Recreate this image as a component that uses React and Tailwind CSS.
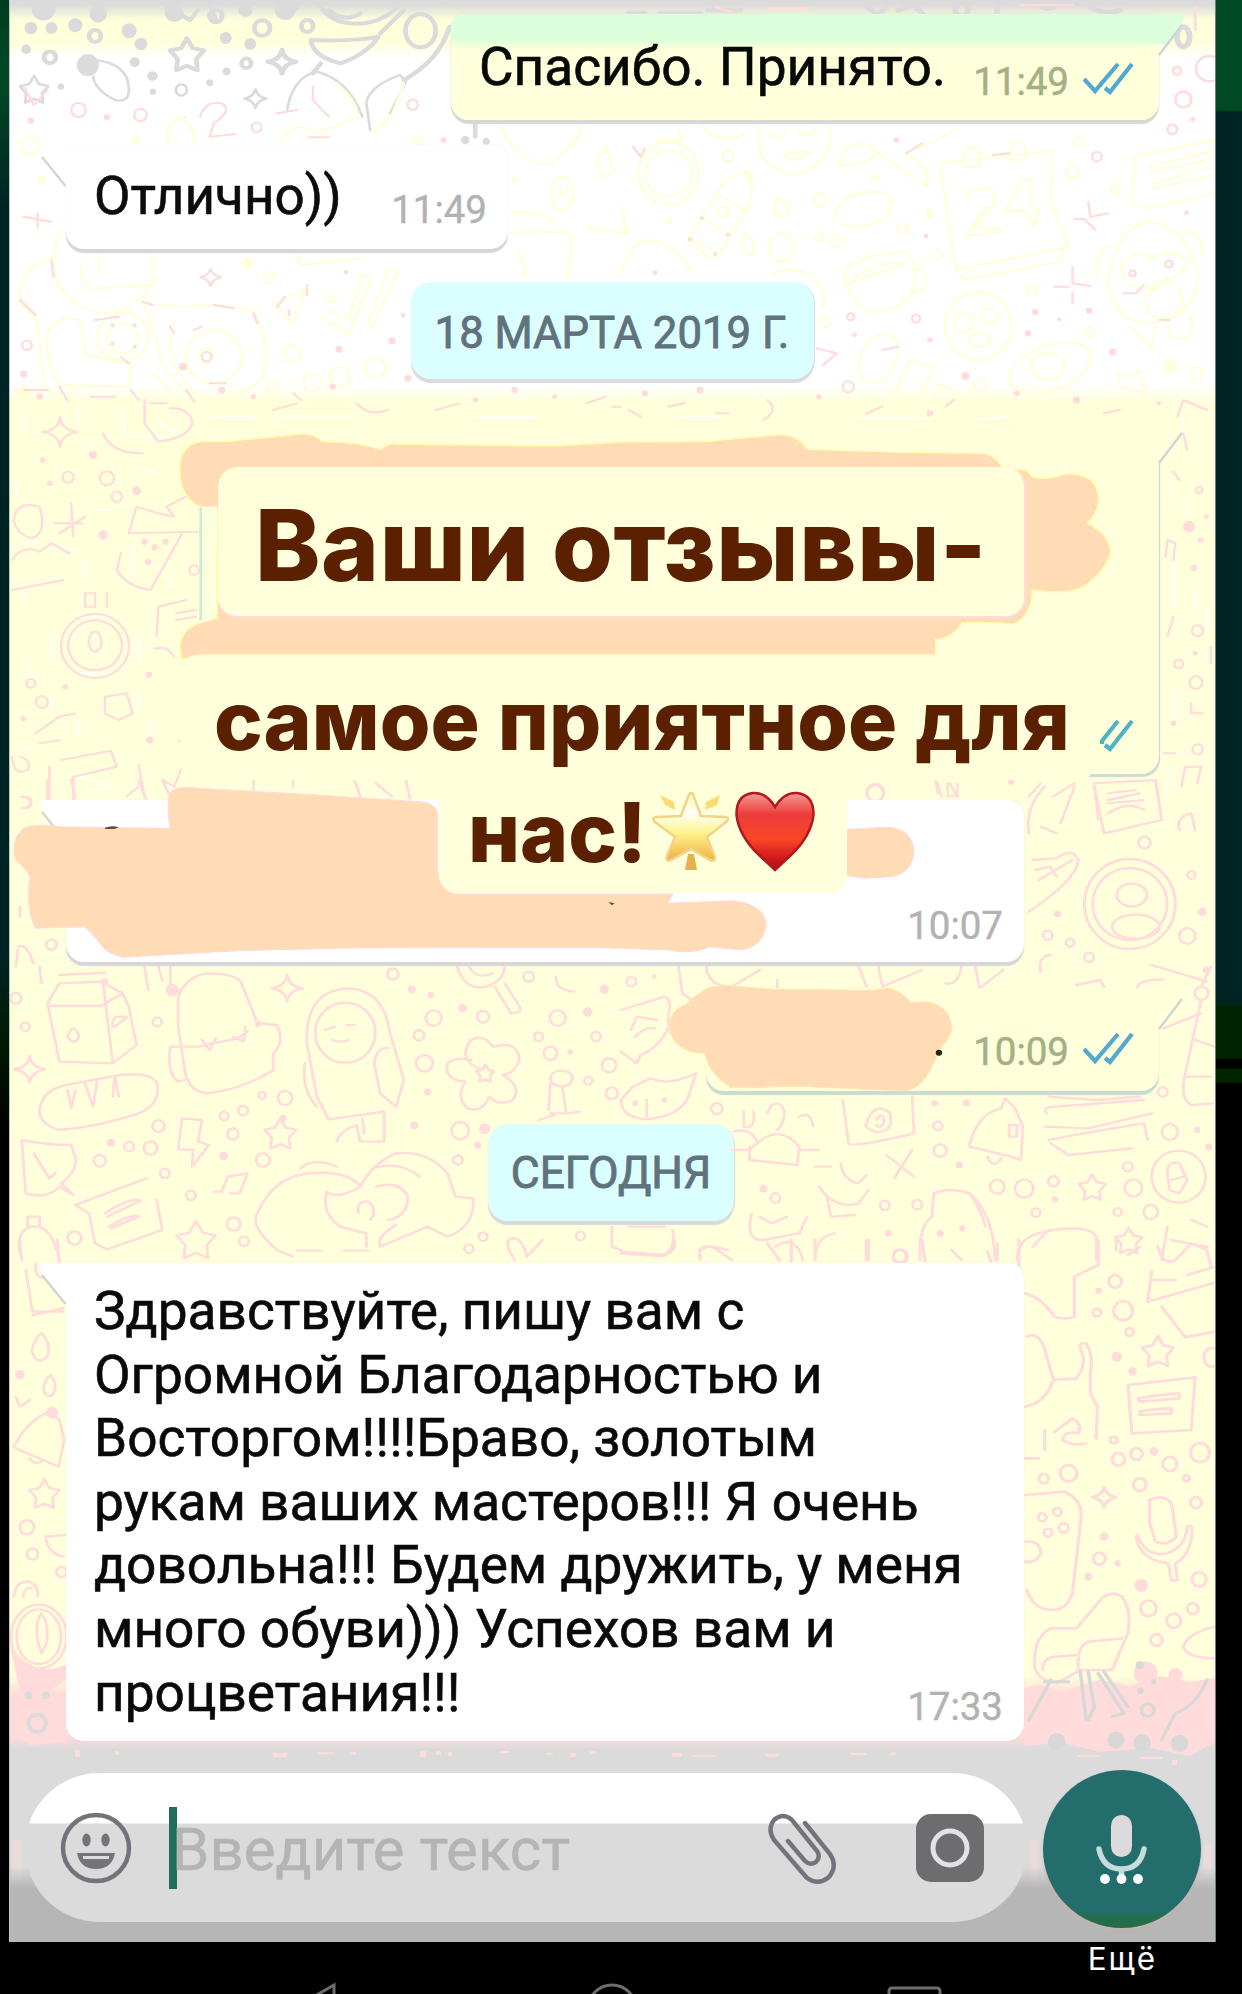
import React from "react";

/* A tile of wallpaper doodles, drawn in its own 1568-wide coordinate space. */
function Tile({ x, y, ky = 1 / 3, color, w = 6, paths = [], rings = [], dots = [] }) {
  return (
    <g transform={`translate(${x} ${y}) scale(0.396 ${ky})`} fill="none" stroke={color} strokeWidth={w + 1} strokeLinejoin="round" strokeLinecap="round">
      {paths.map((d, i) => <path key={i} d={d} />)}
      {rings.map(([cx, cy, r, r2], i) => <ellipse key={i} cx={cx} cy={cy} rx={r} ry={r2 || r * 1.18} />)}
      {dots.map(([cx, cy, r], i) => <ellipse key={i} cx={cx} cy={cy} rx={r} ry={r * 1.18} fill={color} stroke="none" />)}
    </g>
  );
}

const star = (x, y, r) => {
  let d = "";
  for (let i = 0; i < 10; i++) {
    const a = -Math.PI / 2 + (i * Math.PI) / 5;
    const k = i % 2 ? r * 0.55 : r;
    d += `${i ? "L" : "M"}${(x + Math.cos(a) * k).toFixed(1)} ${(y + Math.sin(a) * k * 1.18).toFixed(1)}`;
  }
  return d + "Z";
};
const spark = (x, y, r) =>
  `M${x} ${y - r}Q${x + 4} ${y - 6} ${x + r} ${y}Q${x + 4} ${y + 6} ${x} ${y + r}Q${x - 4} ${y + 6} ${x - r} ${y}Q${x - 4} ${y - 6} ${x} ${y - r}Z`;

const GRAY = "#dbdbdb";
const YEL = "#ffffdb";
const PINK = "#ffdbdb";

function Wallpaper() {
  return (
    <svg className="absolute left-0 top-0 h-[1994px] w-[1242px]" viewBox="0 0 1242 1994">
      <clipPath id="screen"><rect x="10" y="0" width="1205" height="1942" /></clipPath>
      <g clipPath="url(#screen)">
      <Tile x={0} y={0} color={GRAY} w={11}
        paths={[
          "M30 4H1130M60 16H200M420 20L480 60L500 30M530 15L545 60M690 10L730 50L760 5",
          "M800 0Q830 80 920 70Q980 60 1010 10M830 30Q870 70 910 40",
          "M785 120Q900 125 955 110Q930 160 860 190Q790 170 785 120Z",
          "M810 190L790 220M960 100L1020 30M1135 80Q1110 180 1020 240M1200 370V410",
          star(472, 168, 45), spark(712, 185, 36),
        ]}
        rings={[[240, 108, 15], [126, 172, 15], [662, 84, 20], [776, 78, 15], [622, 190, 12], [1062, 92, 38, 50], [385, 228, 7], [545, 48, 16]]}
        dots={[[248, 42, 22], [190, 76, 18], [326, 92, 19], [78, 84, 16], [130, 84, 15], [356, 132, 16], [570, 114, 15], [632, 132, 15], [340, 186, 13], [572, 214, 10], [530, 248, 9], [154, 260, 8], [386, 275, 8], [222, 195, 28], [66, 148, 12], [720, 30, 26], [440, 38, 24], [620, 30, 18], [110, 26, 30], [1175, 420, 11], [1228, 424, 9]]} />
      <Tile x={0} y={0} color={GRAY} w={6}
        paths={["M240 180Q320 190 325 260Q330 310 290 300Q240 270 235 230", star(86, 272, 38), "M725 330Q740 230 800 215Q880 240 915 350", "M1010 225Q930 260 925 310L935 390M1010 225L1025 245L985 340", spark(645, 296, 28)]}
        rings={[[458, 270, 14]]} />
      <Tile x={0} y={0} color={PINK} w={5}
        paths={["M505 350Q520 300 560 310Q590 330 540 370L530 410L595 402M700 340L750 330M790 260V300L830 350M780 412H830M60 260L85 315L120 270M425 390Q440 350 465 350"]}
        rings={[[198, 330, 18], [355, 345, 16], [648, 382, 12], [1042, 314, 13]]}
        dots={[[270, 352, 8], [78, 362, 8], [1120, 420, 7]]} />
      <Tile x={0} y={0} color={YEL} w={6}
        paths={[
          "M425 435Q420 360 460 350Q500 400 485 435M705 435Q740 350 800 400L905 350Q900 300 850 250M945 395L990 345L1020 250",
          "M1265 380Q1300 480 1380 495Q1450 450 1470 380M1505 500Q1510 460 1530 440L1550 520L1520 530Z",
          "M1290 640Q1390 630 1400 680M1290 700Q1400 690 1440 700Q1450 760 1430 830M1300 750Q1340 790 1320 830",
          "M95 640V700M55 650L130 665M1485 680L1568 700M150 700Q110 820 180 900Q270 980 350 900Q410 840 380 770",
          "M205 790Q200 870 240 865L380 855M250 770V820M50 870Q70 780 130 775M50 870Q55 940 90 945L115 1165L175 1200",
          "M120 1000Q140 940 200 960Q215 1000 215 1065L330 1090L325 1160L150 1155Q110 1080 120 1000Z",
          "M360 905Q440 930 540 915L640 930Q690 1050 660 1140Q600 1200 490 1190Q400 1120 400 1030Z",
          "M430 970V1080L490 1180M690 910L770 870L740 970Z M810 950L880 1005L940 830L915 825L880 960L830 930M940 985L1005 815L980 810L930 960Z",
          "M750 760L760 795L910 775M175 1160V1260M360 1170L370 1260M380 1120Q440 1160 460 1250",
        ]}
        rings={[[1420, 580, 28, 50], [1422, 572, 10], [310, 1010, 65, 72], [310, 1015, 40, 45], [738, 1062, 22], [948, 1104, 26], [858, 1130, 25], [790, 1145, 24], [688, 1160, 14], [76, 436, 24], [836, 892, 12], [680, 832, 14], [344, 420, 8], [1055, 420, 10], [540, 1070, 70, 80], [520, 1068, 18]]}
        dots={[[625, 790, 14], [1300, 540, 9], [106, 540, 12], [60, 1180, 20]]} />
      <Tile x={0} y={0} color={PINK} w={5}
        paths={["M60 650L130 665M95 640V680", spark(532, 832, 26), "M130 780L135 830M50 900L90 945M360 905L385 915M540 915L590 925M640 940L650 970M430 980L440 1000M700 920L720 890M775 855V885M240 960L300 950M305 1070L325 1090M530 1150H570M730 930V945M490 990L510 980"]}
        rings={[[68, 1036, 12], [522, 1070, 12]]}
        dots={[[874, 817, 6], [990, 1022, 9], [856, 1048, 9], [60, 1122, 9], [1018, 946, 6], [284, 976, 5], [340, 976, 5], [284, 1032, 5], [340, 1040, 5], [1030, 1135, 9], [462, 1100, 10]]} />

      <Tile x={621} y={0} color={GRAY} w={14}
        paths={["M0 5H1430M1180 15Q1220 50 1260 30M700 30L740 15L760 40M950 20V40M1050 10Q1080 40 1100 10M620 20L650 45L670 20M20 40H60M100 40H200M220 30H300"]}
        rings={[[860, 30, 16], [1420, 110, 16, 30]]} />
      <Tile x={621} y={0} color={PINK} w={6}
        paths={["M370 25H480M1010 15H1140M1450 20V90M240 22L290 40"]}
        rings={[[1420, 298, 20], [1486, 206, 34, 38], [1404, 212, 10], [1392, 388, 12]]} dots={[[1444, 358, 6]]} />
      <Tile x={621} y={0} color={YEL} w={6}
        paths={[
          "M205 380Q260 440 315 400M350 380Q330 500 440 525Q540 490 525 380M375 395Q400 440 420 390M440 390Q480 420 490 385M410 460Q440 500 480 455Z",
          "M90 420H155L145 390M170 720L260 545Q300 510 325 520Q340 560 320 620L240 775Q190 760 170 720ZM240 580L310 630M205 655L275 705M180 720L240 750M300 520L320 510L325 545",
          "M550 495Q560 430 620 430L650 460L770 560Q790 520 720 460L850 390M550 495Q600 505 650 460",
          "M545 630Q560 570 660 575Q700 590 670 650Q620 690 560 675Q530 650 545 630Z",
          "M805 490L1090 452L1085 600L1130 740L870 805L845 800ZM845 805L870 838L1110 785L1115 750",
          "M865 500Q860 440 890 440Q915 450 905 500ZM985 480Q980 425 1005 425Q1030 440 1020 480Z",
          "M865 600Q880 560 930 565Q960 590 930 630L890 680L960 685V695L870 708L920 620M970 630L1015 540H1035V625L1055 625L1045 680L1025 635Z",
          "M1295 470L1500 420M1295 470L1290 610L1335 625L1500 580M1335 500L1490 455M1335 520L1500 475M1345 550L1490 500M1345 565L1500 525",
          "M560 820Q600 760 720 755Q760 800 730 890Q680 940 640 935Q580 920 560 820ZM575 850Q630 780 720 790L575 850M735 810Q780 800 770 850Q755 890 735 870",
          "M0 820Q30 700 90 725Q150 750 175 810M385 820Q450 790 490 840Q520 880 510 920M0 620L15 700H0",
          "M1240 800Q1260 680 1330 665Q1410 680 1440 760Q1490 900 1380 960Q1290 990 1250 920Q1215 860 1240 800ZM1240 740Q1200 740 1205 830M1410 695Q1470 690 1465 760",
          "M1265 800Q1300 740 1340 775Q1380 740 1430 780Q1420 830 1370 840L1350 870L1310 860Q1265 850 1265 800ZM1290 980L1340 1045L1350 980M1380 970Q1380 1020 1420 1015Q1450 1000 1440 950",
          "M600 1110Q600 1030 660 1000Q710 1010 700 1070Q680 1130 650 1150Q610 1150 600 1110ZM690 1180L730 1080L790 1100L760 1180M790 1190L800 1150L850 1180",
          "M980 1150Q980 1070 1080 1035Q1160 1010 1185 1060Q1190 1120 1120 1160Q1020 1200 980 1150Z",
          "M395 590Q380 630 400 650Q430 650 425 620ZM310 700Q300 760 330 765Q345 740 325 705ZM1255 1120L1290 1130L1310 1110L1320 1160L1330 1180L1260 1160Z",
        ]}
        rings={[[120, 520, 76, 94], [120, 520, 58, 70], [270, 468, 14], [502, 600, 16], [405, 742, 32, 42], [710, 688, 14], [546, 722, 16], [500, 712, 10], [798, 765, 12], [902, 978, 84, 102], [866, 968, 24], [930, 950, 20], [905, 1020, 26, 20], [1078, 1100, 42, 40], [1140, 514, 16], [1154, 425, 12], [1248, 570, 12], [1038, 870, 14], [258, 636, 14], [516, 966, 14], [1184, 996, 12], [908, 1155, 16], [1454, 1120, 16], [1370, 900, 46, 54]]}
        dots={[[780, 640, 12], [640, 535, 10], [120, 662, 9], [1388, 1100, 18]]} />
      <Tile x={621} y={0} color={PINK} w={5}
        paths={["M30 440L50 470L60 445M720 460L760 430M1270 880H1300L1320 855M1180 605L1185 650L1230 640M1145 657H1170L1198 690M1095 860H1130M1140 800V850L1185 858M1140 880V910M940 465L980 460M1360 960H1385M495 1045L545 1060L510 1095M660 1050L700 1040"]}
        rings={[[1202, 470, 12], [1292, 820, 8], [1384, 792, 9], [745, 956, 10], [574, 1160, 14], [580, 950, 9]]}
        dots={[[695, 420, 7], [770, 708, 6], [1046, 936, 8], [1182, 932, 8], [1028, 1000, 8], [1106, 958, 5], [1242, 1056, 9], [590, 1004, 6], [780, 1020, 7], [204, 655, 5], [238, 762, 5], [174, 718, 5], [270, 704, 5], [86, 818, 6], [1428, 638, 6], [870, 1128, 10]]} />

      <Tile x={0} y={380} color={PINK} w={5}
        paths={["M60 30H120M150 20L170 60M230 50H290M330 30L350 60M380 70H420M470 30L490 65M690 90L750 70M740 40L760 60M900 70Q930 110 980 90M1100 90L1160 70M1480 70L1530 50M1545 80H1568"]}
        dots={[[100, 50, 8], [560, 30, 9], [640, 50, 7], [840, 20, 8], [1200, 60, 7], [1300, 30, 8], [1400, 50, 6]]} />
      <Tile x={621} y={380} color={PINK} w={5}
        paths={["M20 90L50 110M120 80L160 70M240 100H270M370 60Q400 90 360 120M620 100L660 80M820 80L840 60M1220 100L1260 90M1405 110L1420 60L1480 90"]}
        dots={[[60, 40, 8], [200, 30, 9], [500, 50, 7], [780, 100, 8], [1000, 40, 7], [1150, 60, 9], [1358, 70, 6]]} />
      <Tile x={0} y={400} color="#ffffff" w={4}
        paths={["M60 40V90M200 20V80M230 120V170M310 30V110M350 200L400 220M230 330H300M120 440L200 450M210 480V540M330 440V520M400 500L440 560M60 560V600M190 640L280 650M200 820H270M130 700V780M350 700V780M60 780L90 840M130 890V940M200 960V1010M350 880V940M380 960V1000M200 1130L280 1160M220 1170H260M60 1040L90 1050M550 50H640M700 48H900M1200 52H1350", "M330 110H420M40 250V290M60 430H100M400 60L450 110"]} />
      <Tile x={621} y={400} color="#ffffff" w={4}
        paths={["M1395 420V620M1430 300V350M1450 560V640M1400 860V960M1480 620V700M1420 40V90M1390 250V300M1050 1180L1080 1150M1240 1190H1300M1380 1130V1180M600 55H760M900 60L980 50M150 50H250"]} />
      <Tile x={0} y={400} color={PINK} w={5}
        paths={[
          spark(152, 96, 44), "M365 0V70L400 125Q490 110 485 60Q470 20 430 25M260 100Q280 160 360 160",
          "M35 360Q40 300 100 320Q120 400 80 415Q40 400 35 360ZM140 370H210M150 400L215 350M180 310L185 410M30 480Q60 430 100 455L130 430L175 460",
          "M345 320L325 400L500 395M345 320L400 340L440 350L420 320L470 290M460 400L380 570Q320 560 295 510L305 460M30 570L160 540",
          "M215 580V620H240V580ZM270 580V620M395 710L400 620L470 600M445 640L495 630M445 660L495 650M390 745H420L440 770",
          "M265 890L320 880L335 940L300 960L265 940ZM90 1000L150 950L190 940M100 1030L150 1020",
          "M155 1080L280 1052L295 1100L185 1130V1200M125 1100V1200M350 1095L365 1190M320 1190L350 1160M410 1140L440 1160L460 1100",
          "M30 1070Q35 1130 70 1110Q80 1080 50 1070M55 1190Q90 1190 75 1220L55 1225",
        ]}
        rings={[[240, 738, 86, 96], [240, 736, 68, 75], [240, 725, 16, 30], [270, 235, 18], [172, 232, 14], [295, 290, 13], [78, 850, 11], [106, 906, 15], [490, 510, 12]]}
        dots={[[235, 165, 10], [345, 272, 11], [260, 405, 12], [365, 425, 8], [390, 442, 8], [418, 425, 8], [374, 486, 8], [376, 824, 8], [378, 1020, 9], [165, 860, 7], [108, 180, 7], [126, 250, 7], [456, 1024, 6], [58, 956, 7]]} />
      <Tile x={621} y={400} color={PINK} w={5}
        paths={["M1420 100L1430 150M1395 215L1410 240M1375 470L1380 420L1400 430L1395 480M1380 710L1395 650M1490 740V790M1440 910L1440 940H1470M1370 1060H1400M1415 1160L1425 1100H1465L1455 1150M1030 1190L1060 1150M1090 1190L1145 1150M1195 1150L1205 1260M1195 1150L1350 1140L1365 1250M1230 1180L1300 1170M1230 1210L1320 1200M800 1150L810 1190M825 1150V1190L850 1185M850 1150V1180M400 1140H420"]}
        rings={[[1456, 692, 14], [1408, 792, 11], [1452, 848, 16], [1456, 1048, 13], [1460, 270, 8], [642, 1180, 20, 24]]}
        dots={[[1434, 380, 15], [1464, 420, 7], [1446, 504, 8], [1478, 350, 6], [1450, 760, 6], [1395, 970, 7], [985, 1145, 8]]} />

      <Tile x={0} y={780} color={PINK} w={6}
        paths={[
          "M120 0V60M180 0L190 50M350 0L370 60M410 0L430 50M895 0L910 50M1025 0L1035 55M950 10L990 50M640 0V30M740 0V20",
          "M60 50Q90 60 70 85M50 380V410M45 500Q60 490 75 520L85 550M40 560L45 510M100 560L105 610M365 560L375 630M400 560L410 600M430 560V640L450 630",
          "M150 585L265 578M150 610L255 605L310 640L325 680L345 795L285 850L150 845L120 670L150 610M120 678H255L310 640M260 605L285 850M285 740Q280 700 320 712L290 740M170 770Q185 720 200 770Q190 800 170 770Z",
          "M450 650Q470 590 520 580Q600 580 610 610L650 730L700 735Q720 790 690 820V870Q610 930 520 940Q470 930 465 860L450 740ZM430 800Q420 880 450 905L465 900M430 800H500L600 775L625 755M510 780L530 810L545 775M590 770L615 785L620 740",
          "M775 790Q770 630 880 625Q970 630 985 760L1020 900L1000 980M775 790L800 950L830 1018L970 995M770 850Q760 930 800 980M945 850Q950 800 980 805M945 850L960 940L1000 980M820 750L845 740M875 735H895M840 780Q860 790 880 780M850 1085Q860 1050 900 1035L910 1085H970V1000M915 1015L920 1060",
          "M1220 870Q1150 840 1190 780Q1220 760 1245 800Q1310 780 1312 840Q1300 880 1270 885Q1320 920 1295 960Q1260 980 1235 950Q1220 1000 1180 985Q1150 950 1175 905Q1120 900 1130 850Q1150 830 1190 840",
          star(1225, 882, 24), spark(75, 868, 40), spark(725, 625, 40), star(708, 1065, 42),
          "M1155 560Q1170 625 1220 622Q1270 610 1275 560M1185 560Q1200 600 1245 580M1250 620L1290 700Q1320 700 1312 680L1275 610M1405 590Q1400 630 1450 635M1385 990L1390 910M1430 1000L1420 920M1390 1000H1430L1465 995M1360 1020L1400 1005",
          "M100 985Q110 920 190 910L280 890Q370 870 395 905Q410 970 350 1000Q250 1040 150 1050Q95 1030 100 985ZM170 930L180 985L190 930M215 910L235 980L245 905M285 950L290 890L300 950",
          "M55 1080Q120 1095 180 1095L192 1140Q190 1180 155 1210L185 1245L150 1220Q120 1260 65 1240ZM85 1120L125 1195L140 1180",
          "M460 1015L510 1020L500 1085L528 1095L485 1160L488 1110L450 1108ZM560 1235L575 1190L625 1180L605 1240M540 1235H560M580 1240H605",
          "M190 1275L370 1195M190 1275L225 1300L240 1390L270 1408L410 1350L395 1260M265 1300Q330 1250 355 1262L270 1310M275 1340Q330 1300 350 1310L280 1345",
          "M50 1420Q40 1350 80 1340Q130 1330 150 1440M70 1310H100V1340H70Z", star(495, 1385, 52),
          "M650 1300Q690 1190 780 1180Q880 1170 910 1220Q850 1260 825 1235Q810 1300 860 1340L925 1360V1400M650 1300Q630 1340 700 1410L740 1430M760 1165Q790 1130 850 1160M910 1220Q940 1150 1000 1120Q1080 1110 1130 1180L1150 1250L1195 1255Q1200 1340 1130 1370L1080 1340L960 1400Q950 1370 1000 1335M940 1165Q1010 1140 1060 1190M950 1220Q1010 1200 1030 1250Q1030 1310 980 1320M905 1300Q900 1260 930 1265Q955 1290 935 1320M750 1412H810M870 1412H930",
          "M1300 1440Q1270 1390 1290 1375Q1320 1370 1330 1430L1370 1380M1545 1340V1400L1568 1410",
        ]}
        rings={[[130, 494, 13], [64, 740, 11], [397, 726, 11], [872, 758, 76, 90], [1072, 850, 21], [1220, 710, 15], [1095, 714, 20], [1408, 714, 20], [1390, 820, 17], [1486, 902, 10], [1538, 856, 18], [720, 954, 18], [662, 946, 9], [614, 992, 12], [566, 1008, 11], [588, 1062, 14], [400, 1038, 15], [380, 1104, 17], [326, 1100, 12], [252, 1142, 15], [664, 1140, 17], [1162, 1052, 22], [1156, 1140, 12], [416, 1180, 12], [482, 1246, 12], [590, 1332, 17], [616, 1384, 12], [188, 1374, 17], [1220, 1370, 11], [1184, 1406, 11], [1466, 1368, 11], [1335, 590, 13], [992, 582, 14], [1058, 766, 13], [1505, 770, 12], [1360, 770, 11], [1418, 895, 28, 24], [40, 655, 14], [1545, 940, 15]]}
        dots={[[1040, 628, 10], [1088, 645, 8], [1168, 684, 11], [1484, 696, 12], [1526, 628, 12], [1440, 816, 7], [1080, 936, 9], [1046, 1036, 10], [1224, 1046, 14], [1206, 1096, 9], [565, 1128, 11], [280, 1088, 10], [714, 1015, 9], [435, 630, 16], [652, 732, 8], [265, 605, 9]]} />
      <Tile x={621} y={780} color={PINK} w={6}
        paths={[
          "M1030 160Q1020 80 1070 20M1060 140L1100 160M1110 130L1145 20M1195 20L1220 160L1365 120L1350 0M1230 60L1310 40M1230 100Q1280 60 1320 90M1410 150Q1400 110 1440 100L1450 150M795 0L800 40M830 10L850 50",
          "M1040 240L1100 235Q1140 200 1155 240Q1150 300 1030 395M1045 270L1085 260L1100 290M1055 300L1140 240",
          "M1060 575Q1050 530 1085 525M1340 555L1480 605M1305 625Q1300 600 1370 598M1465 620L1490 560M1370 745L1465 700M1465 660L1425 880Q1410 960 1440 975L1495 970M1450 780L1500 800M1425 890H1490",
          "M145 560L155 640L185 665M215 560Q220 620 280 620L350 570M395 600V625M600 560L620 620M650 560L660 620L760 570M860 560Q850 620 820 610M895 560L905 625L965 570M1150 615L1210 600L1220 620",
          "M0 690L110 650Q130 660 120 700V740Q100 800 50 825L40 850L0 815M25 750L40 710L90 720M35 770Q60 740 85 745",
          "M75 895Q120 920 190 880L170 950Q150 1010 60 1018Q0 1010 0 960L30 920ZM65 960V1010",
          "M285 1055Q330 1040 345 1090Q400 1030 450 1100L445 1155L325 1140V1100M345 1090Q320 1100 325 1140M280 1110H320M310 995V1040Q340 1050 335 995M370 1000Q380 960 405 975Q425 1010 395 1050M450 1010Q480 990 485 1040M450 1110H500",
          "M560 960L575 1090Q580 1105 740 1060L735 950M620 1030Q640 960 680 1000Q690 1060 640 1055Q610 1040 620 1030M645 1020Q660 990 665 1025Q655 1050 645 1035",
          "M880 1095Q900 1000 960 985L970 955L995 985L1015 1040L1010 1140L985 1130L880 1100M925 1130Q940 1170 960 1135M980 1035V1070H1000V1035Z",
          "M1080 950L1200 960L1310 950M1075 1000Q1060 980 1100 980L1320 960M1070 1040L1180 1045L1340 1000M1080 1080Q1160 1060 1320 1030L1330 1080M1085 1090L1130 1125L1290 1105",
          "M670 1125L740 1190M735 1110L690 1195M490 1160H530M555 1150Q560 1200 600 1210L620 1185M500 1220Q540 1290 600 1270L625 1230M520 1250L530 1310L590 1305",
          "M330 1300Q310 1400 380 1375L450 1360L470 1310M390 1400Q440 1360 460 1440M200 1440Q190 1400 230 1400L280 1440M350 1310L380 1330L420 1310",
          "M755 1440Q750 1340 785 1310L790 1240Q830 1220 880 1240Q940 1300 945 1440M885 1250Q910 1290 920 1340M1000 1440Q1000 1370 1070 1355Q1180 1330 1200 1370V1440M1040 1400L1080 1350M1365 1440L1380 1340M1390 1380L1480 1400M1440 1320L1480 1340",
          star(1190, 1225, 36), star(1282, 1385, 36), "M1380 1180Q1380 1140 1410 1150L1430 1200L1410 1240L1385 1230ZM1390 1200L1420 1190",
          "M0 1415L110 1425Q140 1400 130 1350M20 1340H110M490 1440Q490 1370 540 1360M625 1380V1440",
        ]}
        rings={[[642, 38, 22], [1322, 188, 15], [1430, 468, 20], [1078, 466, 12], [1134, 488, 10], [1182, 532, 12], [1285, 372, 115, 135], [1285, 372, 94, 108], [1290, 345, 38, 34], [1300, 440, 60, 36], [1466, 640, 17], [242, 986, 14], [806, 1112, 16], [1386, 1056, 20], [1018, 1226, 23], [950, 1220, 18], [1294, 1224, 22], [1408, 1190, 68, 78], [390, 1254, 12], [666, 1276, 12], [748, 1274, 12], [1048, 1298, 11], [1254, 1296, 10], [1338, 1296, 18], [1368, 936, 12], [1280, 1160, 12], [704, 1428, 16], [1440, 285, 10], [26, 605, 12], [1092, 1204, 13], [800, 1038, 11]]}
        dots={[[1102, 402, 9], [1468, 396, 11], [872, 968, 9], [792, 970, 8], [854, 1155, 9], [676, 1360, 9], [806, 1360, 9], [862, 1345, 8], [360, 1226, 10], [1096, 1258, 8], [84, 590, 6], [1455, 1050, 8], [1484, 1100, 9], [36, 970, 7], [110, 960, 7], [1478, 570, 9]]} />

      <Tile x={0} y={1240} color={PINK} w={6}
        paths={["M50 0L55 60M145 0L150 70M65 90L82 215L160 215M82 225L160 205M90 70Q85 110 110 115M80 330Q90 290 105 280Q130 310 120 350Q90 380 80 330ZM110 445Q115 415 128 405Q150 440 130 468Q110 470 110 445ZM40 470L50 500L75 480", "M35 620Q70 540 125 515L150 540L162 600L148 680L40 625M75 655Q90 680 110 660", star(112, 765, 40), "M165 885L115 890Q120 940 160 950M35 1070Q40 1020 75 1025Q100 1040 95 1070M60 1070Q60 1040 80 1045M105 1120Q80 1160 105 1240Q135 1180 105 1120Z"]}
        rings={[[68, 862, 18], [82, 942, 14], [155, 996, 13], [98, 1190, 70, 96], [98, 1190, 56, 82]]}
        dots={[[50, 404, 12], [132, 518, 15]]} />
      <path d="M10 1648Q40 1680 66 1664V1680L50 1690L66 1698V1742L30 1745L10 1732V1700L20 1690Z M1024 1690Q1040 1680 1060 1692L1100 1680L1130 1686L1160 1676L1190 1682L1215 1678V1742L1190 1756L1150 1748L1100 1752L1060 1742L1024 1746Z" fill={PINK} />
      <Tile x={621} y={1240} color={PINK} w={7}
        paths={[
          "M1005 0V90M1020 160Q1060 170 1095 230Q1120 240 1145 230V110L1205 75V0M1340 95L1330 185L1495 130M1340 120H1400M1365 200L1425 292L1500 275M1430 105L1500 80M1250 0V30M1280 45L1310 20M1355 20Q1370 80 1400 60L1440 10L1480 30L1490 80",
          "M1025 290Q1060 270 1075 350Q1090 410 1092 420L1150 415Q1175 380 1165 340Q1150 305 1175 310Q1195 350 1185 400V460L1203 500L1200 595M1090 425Q1070 490 1020 500M1070 570V630M1020 655H1055M1095 575L1140 535Q1165 550 1155 580Q1120 570 1115 600Q1140 620 1175 610",
          "M1280 435L1450 412L1440 570L1290 580ZM1305 475Q1350 465 1410 460V475L1310 485ZM1310 515Q1350 505 1390 505V520L1310 525Z", star(1356, 338, 42),
          "M1020 765L1120 755Q1165 780 1162 830L1140 1060Q1125 1110 1090 1110Q1040 1110 1025 1050M1020 905Q1060 900 1060 940Q1050 970 1020 965",
          spark(1220, 772, 30), "M1335 780Q1370 760 1390 790L1403 890Q1380 920 1350 905L1335 850ZM1305 885Q1320 945 1370 942Q1425 930 1430 860Q1445 850 1442 880Q1435 950 1400 970L1405 1020L1390 1022L1382 970Q1310 960 1300 890",
          "M1045 1280Q1040 1190 1085 1165H1150L1215 1075Q1240 1050 1265 1070Q1290 1110 1280 1180L1240 1290L1160 1290L1100 1330Q1050 1320 1045 1280ZM1155 1290Q1150 1220 1180 1205L1265 1195M1065 1290Q1065 1250 1100 1250L1150 1245",
          "M1500 1160Q1430 1180 1420 1220Q1430 1255 1500 1255M490 0V60M620 0V60M760 0L768 65M0 40L100 48Q140 40 135 0M200 50Q190 15 230 20L270 30M370 10L400 60M430 0V65M835 30L860 60M925 35L935 65M950 10V60",
        ]}
        rings={[[1248, 124, 16], [1268, 212, 24], [1202, 218, 10], [1284, 276, 10], [1492, 352, 20, 28], [1244, 600, 9], [1256, 658, 16], [1386, 672, 18], [1462, 638, 24], [1302, 642, 15], [1130, 700, 21], [1068, 716, 12], [1310, 734, 16], [1452, 788, 14], [1064, 832, 10], [1102, 815, 10], [1078, 878, 10], [1118, 864, 12], [1208, 956, 15], [1460, 1018, 18], [1332, 1105, 20], [1396, 1142, 18], [1444, 1106, 14], [1352, 1200, 15], [1428, 715, 8], [705, 50, 18]]}
        dots={[[1206, 152, 8], [1252, 350, 13], [1292, 394, 11], [1346, 634, 11], [1220, 890, 11], [1254, 970, 8], [1180, 1010, 10], [1314, 1036, 17], [1325, 1300, 30], [1400, 1305, 18]]} />
      <Tile x={621} y={1240} color="#d8d8d8" w={8}
        paths={["M1085 1320L1030 1440M1070 1325H1130M1160 1295L1175 1440M1180 1295L1195 1400L1180 1440M1205 1300L1270 1420L1240 1430M1220 1295L1280 1400M1480 1320Q1450 1400 1400 1420L1365 1500"]}
        rings={[[1330, 1410, 16]]} dots={[[1310, 1275, 10], [1312, 1352, 8], [1345, 1325, 7], [1100, 1505, 22], [1250, 1500, 22], [1316, 1508, 22], [1410, 1510, 22]]} />
      <Tile x={0} y={1240} color={GRAY} w={10} rings={[[94, 1450, 22]]} dots={[[72, 1366, 10], [116, 1366, 10]]} />
      <g fill={PINK}>
        {[[75, 1750, 5, 7], [115, 1751, 4, 4], [273, 1753, 14, 4], [317, 1752, 18, 2], [350, 1752, 6, 3], [420, 1751, 6, 6], [436, 1751, 5, 4], [448, 1752, 4, 4], [500, 1751, 10, 2], [545, 1753, 8, 2], [570, 1753, 6, 4], [590, 1751, 6, 3], [672, 1753, 10, 4], [692, 1755, 24, 2], [765, 1754, 14, 3], [850, 1753, 16, 2], [890, 1752, 6, 3], [1078, 1755, 22, 2], [1140, 1757, 22, 2], [1172, 1760, 5, 5], [1030, 1840, 8, 50], [1204, 1845, 8, 34], [12, 1840, 10, 44]].map(([x, y, w, h], i) => <rect key={i} x={x} y={y} width={w} height={h} rx="1" opacity={h > 20 ? 0.4 : 1} />)}
      </g>
      </g>
    </svg>
  );
}

function Ticks({ half }) {
  return (
    <svg className="h-[33px] w-[52px]" viewBox="0 0 52 33" fill="none" stroke={half ? "#4fb3c4" : "#52a8d0"} strokeWidth="4.200" strokeLinecap="butt">
      {!half && <path d="M1 17L12 29L35 2" />}
      {half ? <path d="M35 2L19 22V25" /> : null}
      <path d="M22 26L27 30L49 2" />
    </svg>
  );
}

function Time({ children, green }) {
  return (
    <span className={green ? "text-[38.500px] leading-[40px] text-[#a3b184] [-webkit-text-stroke:0.5px_#a3b184]" : "text-[38.500px] leading-[40px] text-[#b2b2b2] [-webkit-text-stroke:0.4px_#b2b2b2]"}>{children}</span>
  );
}

function DateChip({ children, className }) {
  return (
    <div className={"self-center rounded-[20px] bg-[#dbffff] text-center text-[#5f727e] shadow-[0_4px_1px_#d9d9de,1px_1px_1px_#d9d9de] [-webkit-text-stroke:0.9px_#5f727e] " + className}>{children}</div>
  );
}

function TailLeft() {
  return (
    <svg className="absolute -left-[26px] top-0 h-[44px] w-[34px]" viewBox="0 0 34 44">
      <path d="M0 0H34V44H26V41L2 12Q-1 4 0 0Z" fill="#fff" />
      <path d="M2 12L25.500 41" stroke="#d5d5d8" strokeWidth="2.500" />
    </svg>
  );
}

function TailRight({ lower, upper }) {
  return (
    <svg className="absolute -right-[25px] top-0 h-[44px] w-[34px]" viewBox="0 0 34 44">
      <path d="M34 0H0V44H9V41L31 12Q34 6 34 0Z" fill={lower} />
      {upper && <path d="M34 0H0V30H17.500L31 12Q34 6 34 0Z" fill={upper} />}
      <path d="M32 11L9 41" stroke="#ccd6d6" strokeWidth="2.500" />
    </svg>
  );
}

function GlowingStar() {
  return (
    <svg className="h-[82px] w-[80px]" viewBox="0 0 80 82">
      <defs>
        <linearGradient id="starFill" x1="0" y1="0" x2="0" y2="1">
          <stop offset="0" stopColor="#fff3b0" /><stop offset=".3" stopColor="#fffffa" /><stop offset=".58" stopColor="#fff490" /><stop offset="1" stopColor="#f0b040" />
        </linearGradient>
      </defs>
      <path d="M9 5L23 12L24 20L14 15ZM69 5L55 12L54 20L66 15Z" fill="#fbdc6c" />
      <path d="M34 80L37 64H43L46 80Z" fill="#e6b04c" />
      <path d="M40 3Q42 3 43 7L50 26L75 27Q79 28 75 32L56 47L64 67Q65 72 59 70L40 59L20 70Q14 72 16 66L24 47L4 32Q0 28 5 27L30 26L37 7Q38 3 40 3Z" fill="url(#starFill)" stroke="#f2d488" strokeWidth="2.500" />
    </svg>
  );
}

function RedHeart() {
  return (
    <svg className="h-[82px] w-[80px]" viewBox="0 0 80 82">
      <defs>
        <linearGradient id="heartFill" x1="0" y1="0" x2="0" y2="1">
          <stop offset="0" stopColor="#f79a96" /><stop offset=".28" stopColor="#ec3c3a" /><stop offset=".6" stopColor="#fb4626" /><stop offset=".8" stopColor="#d92020" /><stop offset="1" stopColor="#a80d12" />
        </linearGradient>
      </defs>
      <path d="M40 17Q31 2 18 3Q1 5 1.500 25Q4 46 24 65L40 80L56 65Q76 46 78.500 25Q79 5 62 3Q49 2 40 17Z" fill="url(#heartFill)" stroke="#b3181b" strokeWidth="2.500" />
    </svg>
  );
}

function Message({ className, children }) {
  return <div className={"relative flex justify-between " + className}>{children}</div>;
}

export default function App() {
  return (
    <div className="relative flex h-[1994px] w-[1242px] flex-col overflow-hidden bg-black font-['Roboto',sans-serif]">
      <div className="flex h-[1942px] bg-black">
        <div className="w-[9px] shrink-0 bg-[linear-gradient(#003c20_0,#004924_80px,#002424_205px,#002424_960px,#001a00_1040px,#000_1130px)]" />
        <main className="flex w-[1206px] shrink-0 flex-col border-l border-[#b9c9c4] bg-[linear-gradient(#dbdbdb_0,#dbdbdb_5px,#ffffdb_20px,#ffffdb_42px,#fff_58px,#fff_385px,#ffffdb_402px,#ffffdb_1676px,#ffdbdb_1694px,#ffdbdb_1736px,#dbdbdb_1750px)]">
          <Wallpaper />

          <Message className="ml-[441px] mr-[56px] mt-[14px] h-[106px] rounded-bl-[18px] rounded-br-[18px] rounded-tl-[14px] bg-[linear-gradient(#dbffdb_0,#dbffdb_24px,#ffffdb_36px)] pl-[28px] pr-[24px] shadow-[0_4px_1px_#d8d8d2,0_0_2px_#dbdbdb]">
            <TailRight lower="#ffffdb" upper="#dbffdb" />
            <span className="pt-[21px] text-[53.200px] leading-[64px] text-[#050a05] [-webkit-text-stroke:0.6px_#050a05]">Спасибо. Принято.</span>
            <div className="flex gap-[14px] pt-[48px]">
              <Time green>11:49</Time><Ticks />
            </div>
          </Message>

          <Message className="ml-[56px] mt-[25px] h-[104px] w-[442px] rounded-b-[18px] rounded-tr-[14px] bg-white pl-[28px] pr-[21px] shadow-[0_4px_1px_#d6d6d8,0_0_1px_#dbdbdb]">
            <TailLeft />
            <span className="pt-[19px] text-[53px] leading-[64px] text-[#0c0c0c] [-webkit-text-stroke:0.6px_#0c0c0c]">Отлично))</span>
            <div className="pt-[45px]"><Time>11:49</Time></div>
          </Message>

          <DateChip className="-ml-[1px] mt-[33px] h-[97px] w-[403px] text-[43.700px] leading-[102px]">18 МАРТА 2019 Г.</DateChip>

          <Message className="ml-[190px] mr-[56px] mt-[43px] h-[352px] rounded-b-[18px] rounded-tl-[14px] bg-[#ffffdb] shadow-[1px_3px_1px_#cfdad6,1px_0_1px_#cfdad6]">
            <TailRight lower="#ffffdb" />
            <div className="ml-auto mr-[24px] mt-[297px]"><Ticks half /></div>
          </Message>

          <Message className="ml-[56px] mt-[26px] h-[162px] w-[958px] rounded-b-[18px] rounded-tr-[14px] bg-white pr-[21px] shadow-[0_4px_1px_#d6d6db,0_0_1px_#dbdbdb]">
            <TailLeft />
            <div className="ml-auto pt-[106px]"><Time>10:07</Time></div>
          </Message>

          <Message className="ml-[696px] mr-[56px] mt-[26px] h-[103px] rounded-bl-[18px] rounded-br-[18px] rounded-tl-[14px] bg-[#ffffdb] pr-[24px] shadow-[0_4px_1px_#cbdad2,0_0_1px_#cbdad2]">
            <TailRight lower="#ffffdb" />
            <div className="ml-auto flex gap-[14px] pt-[44px]">
              <Time green>10:09</Time><Ticks />
            </div>
          </Message>

          <DateChip className="-ml-[3px] mt-[33px] h-[97px] w-[246px] text-[44.400px] leading-[99px]">СЕГОДНЯ</DateChip>

          <Message className="ml-[56px] mt-[42px] h-[478px] w-[958px] rounded-b-[18px] rounded-tr-[14px] bg-white pl-[28px] pr-[21px] shadow-[0_0_1px_#d2d2d6]">
            <TailLeft />
            <p className="whitespace-nowrap pt-[17px] text-[53.200px] leading-[63.600px] text-[#0a0a0a] [-webkit-text-stroke:0.6px_#0a0a0a]">
              Здравствуйте, пишу вам с<br />Огромной Благодарностью и<br />Восторгом!!!!Браво, золотым<br />рукам ваших мастеров!!! Я очень<br />довольна!!! Будем дружить, у меня<br />много обуви))) Успехов вам и<br />процветания!!!
            </p>
            <div className="-ml-[97px] self-end pb-[14px]"><Time>17:33</Time></div>
          </Message>

          <div className="relative flex h-[201px] items-start gap-[16px] bg-[linear-gradient(transparent_125px,#b6b6b6_148px)] pl-[15px]">
            <div className="mt-[32px] flex h-[149px] w-[1002px] shrink-0 items-center rounded-[75px] bg-[linear-gradient(#fff_50px,#dbdbdb_51px)] pl-[35px]">
              <svg className="mt-[1px] h-[72px] w-[72px]" viewBox="0 0 72 72" fill="none" stroke="#73737b" strokeWidth="4.500">
                <circle cx="36" cy="36" r="33" />
                <ellipse cx="26.500" cy="28" rx="4.200" ry="6.500" fill="#73737b" stroke="none" />
                <ellipse cx="45.500" cy="28" rx="4.200" ry="6.500" fill="#73737b" stroke="none" />
                <path d="M17 41H55Q52 57 36 57Q20 57 17 41Z" fill="#73737b" stroke="none" />
                <path d="M23 45.500H49" stroke="#dbdbdb" strokeWidth="3" />
              </svg>
              <div className="ml-[37px] mt-[1px] h-[82px] w-[8px] bg-[#246d5b]" />
              <span className="-ml-[5px] mt-[4px] flex-1 text-[60px] leading-[72px] text-[#b4b4b4] [-webkit-text-stroke:0.5px_#b4b4b4]">Введите текст</span>
              <svg className="mr-[80px] mt-[1px] h-[80px] w-[68px]" viewBox="0 0 68 80" fill="none" stroke="#73737b" strokeWidth="4.400" strokeLinecap="round">
                <path d="M37 15L62 46Q70 58 61 69Q50 78 39 70L6 32Q-1 21 6 12Q15 4 24 12L49 43Q53 49 48 54Q42 58 37 53L20 33" />
              </svg>
              <svg className="mr-[43px] h-[68px] w-[68px]" viewBox="0 0 68 68">
                <rect x="0" y="0" width="68" height="68" rx="15" fill="#6d6d70" />
                <circle cx="34" cy="34" r="17" fill="none" stroke="#e3e3e3" strokeWidth="5" />
              </svg>
            </div>
            <div className="mt-[29px] flex h-[158px] w-[158px] shrink-0 items-center justify-center rounded-full bg-[linear-gradient(#246d6d_88%,#246d49_95%)] shadow-[0_2px_3px_#c9b5ab]">
              <svg className="h-[158px] w-[158px]" viewBox="0 0 158 158" fill="none">
                <rect x="68" y="45" width="21" height="42" rx="10.500" fill="#dbdbdb" />
                <path d="M56 79Q60 99 78.500 99Q97 99 101 79M78.500 99V108" stroke="#c4dcdb" strokeWidth="5.500" strokeLinecap="round" />
                <g fill="#fff"><circle cx="62" cy="109" r="4.900" /><circle cx="78.500" cy="109" r="4.900" /><circle cx="95" cy="109" r="4.900" /></g>
              </svg>
            </div>
          </div>
        </main>
        <div className="flex-1 border-l border-[#6f7f7c] bg-[linear-gradient(#004924_0,#004924_110px,#002424_112px,#002424_1004px,#002400_1006px,#002400_1058px,#000_1060px,#000_1068px,#002400_1069px,#002400_1082px,#000_1084px)]" />
      </div>

      <footer className="flex h-[52px] justify-between pl-[308px] pr-[56px]">
        <svg className="mt-[40px] h-[12px] w-[640px]" viewBox="308 1982 640 12" fill="none" stroke="#6d6d6d" strokeWidth="3">
          <path d="M308 2000L334 1985V2000" />
          <circle cx="612" cy="2009" r="24" />
          <rect x="889" y="1988" width="51" height="40" rx="3" />
        </svg>
        <span className="-ml-4 mr-[29px] whitespace-nowrap font-['Inter',sans-serif] text-[31.500px] leading-[34px] tracking-[2px] text-white">Ещё</span>
      </footer>

      <svg className="absolute left-0 top-0 h-[1994px] w-[1242px]" viewBox="0 0 1242 1994" fill="#ffdbb6">
        <g transform="translate(0 400) scale(.396 .33333)">
          <path d="M455 230Q445 140 505 125H570L760 102Q790 98 815 125Q900 125 960 148Q985 125 1010 133L1400 138L1568 126L1780 125L1960 105Q2010 98 2040 148L2280 157L2480 160Q2510 162 2535 205L2590 210L2610 232Q2650 240 2680 225Q2740 212 2765 255Q2790 320 2745 370Q2800 400 2805 455Q2790 520 2735 560Q2700 585 2607 570Q2605 650 2560 672Q2500 665 2430 668Q2400 720 2363 718V765H500L460 780Q440 700 500 670L548 655V330L500 318Q460 290 455 230Z" stroke="#ffffa8" strokeWidth="4" />
          <path d="M507 322L548 318V450Q525 500 530 570L548 610Q550 670 507 665Z" fill="#fbffdb" />
          <path d="M507 322V660" stroke="#cdebd8" strokeWidth="7" />
        </g>
        <g transform="translate(0 780) scale(.396 .33333)">
          <path d="M430 145Q415 40 440 28Q470 18 500 25L760 42L1060 65Q1105 70 1105 110V270Q1110 330 1150 342H1700L1685 370L1850 362Q1925 370 1935 430Q1930 500 1870 510L1790 500Q1750 525 1690 510L1480 502L900 504L600 512L310 532Q265 520 250 485L215 440L90 445Q65 390 75 300Q80 280 40 240Q25 180 60 145Q90 130 150 140ZM2140 148L2240 142Q2300 145 2308 210Q2305 280 2250 290L2180 295L2130 285Z" stroke="#ffdbdb" strokeWidth="3" />
          <path d="M265 143Q280 135 300 141L290 147H265ZM1536 366L1552 370L1545 376Z" fill="#55504a" />
          <path d="M1785 625Q1740 660 1735 672Q1690 690 1690 745Q1705 820 1780 820Q1790 880 1845 922Q1900 925 2000 918L2280 932Q2330 935 2365 830L2375 805Q2410 760 2402 730Q2390 670 2330 665L2300 668Q2270 625 2240 625Q2190 635 2140 630L1950 628L1850 618Q1810 615 1785 625Z" stroke="#ffe9a8" strokeWidth="3" />
          <ellipse cx="2371" cy="818" rx="8" ry="9" fill="#24240a" />
        </g>
        <path d="M961 661.500H1080" stroke="#ffdbdb" strokeWidth="1.500" />
      </svg>

      <section className="absolute left-[180px] top-[467px] flex w-[916px] flex-col font-['Inter',sans-serif] font-extrabold text-[#5a2000]">
        <div className="ml-[38px] h-[151px] w-[808px] whitespace-nowrap rounded-[20px] border-b-2 border-r-2 border-[#ffdbdb] bg-[#ffffdb] pl-[37px] text-[98.500px] leading-[158px] tracking-[0.650px]">Ваши отзывы-</div>
        <div className="mt-[37px] h-[125px] rounded-[18px] bg-[#ffffdb] pl-[34px] pt-[9px] text-[82px] leading-[114px]">
          <span className="whitespace-nowrap">самое приятное для</span>
        </div>
        <div className="-mt-[4px] ml-[259px] flex h-[117px] w-[408px] rounded-b-[18px] bg-[#ffffdb] pl-[29px]">
          <span className="w-[178px] text-[82px] leading-[114px]">нас!</span>
          <div className="ml-[5px] flex gap-[4px] pt-[14px]"><GlowingStar /><RedHeart /></div>
        </div>
      </section>
    </div>
  );
}
